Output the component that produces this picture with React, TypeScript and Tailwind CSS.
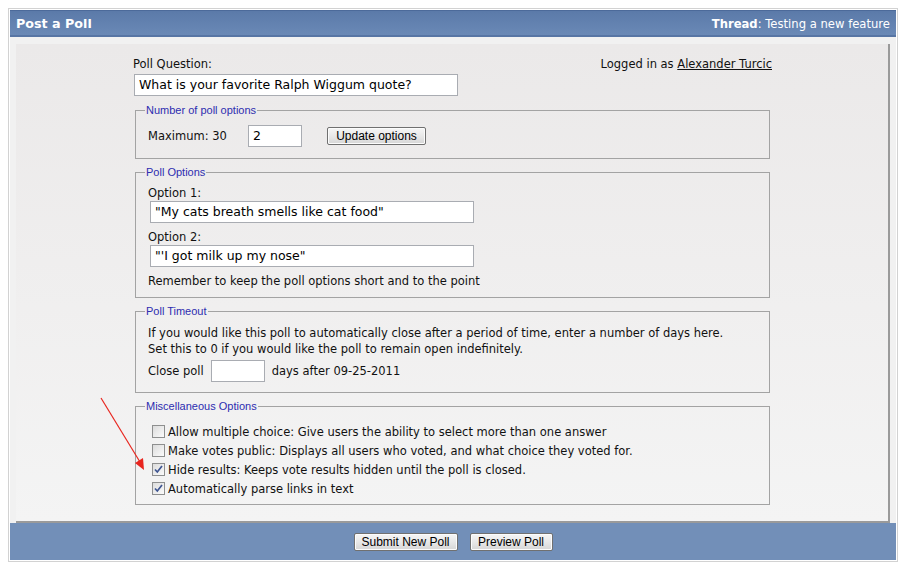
import type { ReactNode } from 'react';

const font = "font-['DejaVu_Sans',Verdana,sans-serif]";

function Fieldset({ legend, children, className = '' }: { legend: ReactNode; children: ReactNode; className?: string }) {
  return (
    <fieldset className={`ml-[3px] mr-[2px] border border-[#a3a3a3] px-[9px] ${className}`}>
      <legend className="px-[1px] font-['Liberation_Sans',Arial,sans-serif] text-[11px] leading-[14px] text-[#2d2db0]">
        {legend}
      </legend>
      <div className="pl-[3px]">{children}</div>
    </fieldset>
  );
}

function TextBox({ value, className = '' }: { value: string; className?: string }) {
  return (
    <div
      className={`h-[22px] border border-[#a9acb2] bg-white pl-[4px] text-[12.5px] leading-[20px] text-black whitespace-nowrap overflow-hidden ${className}`}
    >
      {value}
    </div>
  );
}

function Button({ children, className = '' }: { children: ReactNode; className?: string }) {
  return (
    <div
      className={`flex items-center justify-center rounded-[2px] border border-[#707070] bg-gradient-to-b from-[#f6f6f6] via-[#e8e8e8] to-[#d6d6d6] font-['Liberation_Sans',Arial,sans-serif] text-[12px] leading-none text-black shadow-[inset_0_0_0_1px_#fcfcfc] ${className}`}
    >
      {children}
    </div>
  );
}

function Checkbox({ checked }: { checked?: boolean }) {
  return (
    <span className="flex h-[13px] w-[13px] shrink-0 items-center justify-center border border-[#8e8f8f] bg-gradient-to-br from-[#dcdcdc] to-[#fbfbfb]">
      {checked && (
        <svg width="11" height="11" viewBox="0 0 11 11">
          <path d="M2 5.5 L4.3 8 L9 2" fill="none" stroke="#3e5591" strokeWidth="1.7" />
        </svg>
      )}
    </span>
  );
}

function CheckRow({ checked, children }: { checked?: boolean; children: ReactNode }) {
  return (
    <div className="flex h-[19px] items-center gap-[3px] pl-[4px]">
      <Checkbox checked={checked} />
      <span>{children}</span>
    </div>
  );
}

export default function App() {
  return (
    <div className={`relative h-[571px] w-[906px] bg-white pl-[8px] pt-[8px] text-[11.5px] leading-[14px] text-[#111] ${font}`}>
      <div className="w-[890px] border border-[#d2d2d2] bg-white p-[1px]">
        {/* Title bar */}
        <div className="flex h-[27px] items-center justify-between border-t border-[#4c6a9a] border-b-2 border-b-[#5775a4] bg-gradient-to-b from-[#5b7aa9] to-[#6a89b6] pl-[6px] pr-[6px] pt-[2px] text-white">
          <span className="text-[12.7px] font-bold">Post a Poll</span>
          <span className="text-[11.6px]">
            <b>Thread</b>: Testing a new feature
          </span>
        </div>

        {/* Body */}
        <div className="bg-[#f1f1f1] px-[6px] pt-[7px]">
          <div className="h-[479px] border-b-2 border-r-2 border-[#9a9a9a] bg-gradient-to-b from-[#ebe9e9] to-[#f4f4f4] pt-[13px]">
            <div className="mx-auto w-[640px]">
              <div className="flex items-center justify-between pl-[1px] leading-[14px]">
                <span>Poll Question:</span>
                <span>
                  Logged in as <span className="underline">Alexander Turcic</span>
                </span>
              </div>
              <TextBox className="ml-[2px] mt-[3px] w-[324px]" value="What is your favorite Ralph Wiggum quote?" />

              <Fieldset legend="Number of poll options" className="mt-[7px] pb-[11px]">
                <div className="mt-[8px] flex items-center">
                  <span className="w-[100px]">Maximum: 30</span>
                  <TextBox className="w-[54px] pl-[3px]" value="2" />
                  <Button className="ml-[25px] h-[18px] w-[99px]">Update options</Button>
                </div>
              </Fieldset>

              <Fieldset legend="Poll Options" className="mt-[6px] pb-[9px]">
                <div className="mt-[7px] leading-[14px]">Option 1:</div>
                <TextBox className="ml-[2px] mt-[1px] w-[324px]" value={'"My cats breath smells like cat food"'} />
                <div className="mt-[7px] leading-[14px]">Option 2:</div>
                <TextBox className="ml-[2px] mt-[1px] w-[324px]" value={'"\'I got milk up my nose"'} />
                <div className="mt-[7px] leading-[14px]">Remember to keep the poll options short and to the point</div>
              </Fieldset>

              <Fieldset legend="Poll Timeout" className="mt-[6px] pb-[10px]">
                <div className="mt-[7px] leading-[16px]">
                  If you would like this poll to automatically close after a period of time, enter a number of days here.
                  <br />
                  Set this to 0 if you would like the poll to remain open indefinitely.
                </div>
                <div className="mt-[3px] flex items-center">
                  <span>Close poll</span>
                  <TextBox className="ml-[7px] w-[54px]" value="" />
                  <span className="ml-[7px]">days after 09-25-2011</span>
                </div>
              </Fieldset>

              <Fieldset legend="Miscellaneous Options" className="mt-[6px] pb-[6px]">
                <div className="mt-[9px]">
                  <CheckRow>Allow multiple choice: Give users the ability to select more than one answer</CheckRow>
                  <CheckRow>Make votes public: Displays all users who voted, and what choice they voted for.</CheckRow>
                  <CheckRow checked>Hide results: Keeps vote results hidden until the poll is closed.</CheckRow>
                  <CheckRow checked>Automatically parse links in text</CheckRow>
                </div>
              </Fieldset>
            </div>
          </div>
        </div>

        {/* Footer */}
        <div className="flex h-[37px] items-center justify-center gap-[12px] bg-[#728fb8]">
          <Button className="h-[18px] w-[104px]">Submit New Poll</Button>
          <Button className="h-[18px] w-[83px]">Preview Poll</Button>
        </div>
      </div>

      {/* Annotation arrow */}
      <svg className="pointer-events-none absolute left-0 top-0" width="906" height="571">
        <line x1="101" y1="398" x2="140" y2="462" stroke="#e8261f" strokeWidth="1.2" />
        <polygon points="144,470 135,463 143,458" fill="#e8261f" />
      </svg>
    </div>
  );
}
